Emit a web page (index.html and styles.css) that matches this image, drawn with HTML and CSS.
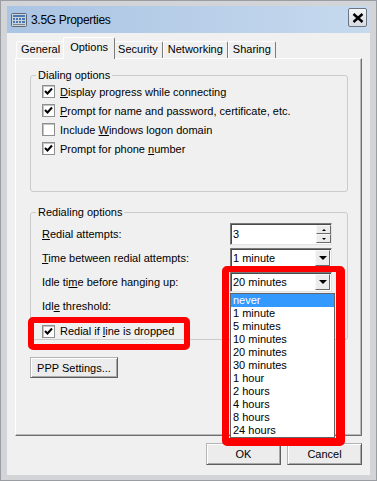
FILE: index.html
```html
<!DOCTYPE html>
<html lang="en">
<head>
    <meta charset="UTF-8">
    <meta name="viewport" content="width=device-width, initial-scale=1.0">
    <title>3.5G Properties</title>
    <link rel="stylesheet" href="styles.css">
</head>
<body>
    <div class="window">
        <div class="titlebar">
            <svg class="app-icon" width="16" height="16" viewBox="0 0 16 16">
                <rect x="0.5" y="1.5" width="15" height="13" rx="1" fill="#cdd3da" stroke="#5f6873"/>
                <rect x="2" y="3" width="12" height="2" fill="#4a78b5"/>
                <rect x="2" y="6" width="2" height="2" fill="#4a78b5"/>
                <rect x="5" y="6" width="2" height="2" fill="#4a78b5"/>
                <rect x="8" y="6" width="2" height="2" fill="#4a78b5"/>
                <rect x="11" y="6" width="3" height="2" fill="#4a78b5"/>
                <rect x="2" y="9" width="2" height="2" fill="#4a78b5"/>
                <rect x="5" y="9" width="2" height="2" fill="#4a78b5"/>
                <rect x="8" y="9" width="2" height="2" fill="#4a78b5"/>
                <rect x="11" y="9" width="3" height="2" fill="#4a78b5"/>
                <rect x="2" y="12" width="12" height="1" fill="#7d8793"/>
            </svg>
            <span class="title">3.5G Properties</span>
            <div class="close-btn">
                <svg width="12" height="10" viewBox="0 0 12 10">
                    <path d="M1.5 1 L10.5 9 M10.5 1 L1.5 9" stroke="#000" stroke-width="2.4"/>
                </svg>
            </div>
        </div>

        <div class="client">
            <div class="tabs">
                <div class="tab">General</div>
                <div class="tab active">Options</div>
                <div class="tab">Security</div>
                <div class="tab">Networking</div>
                <div class="tab">Sharing</div>
            </div>

            <div class="panel">
                <fieldset class="group dialing">
                    <legend>Dialing options</legend>
                    <label class="check"><span class="box checked"></span><span><u>D</u>isplay progress while connecting</span></label>
                    <label class="check"><span class="box checked"></span><span><u>P</u>rompt for name and password, certificate, etc.</span></label>
                    <label class="check"><span class="box"></span><span>Include <u>W</u>indows logon domain</span></label>
                    <label class="check"><span class="box checked"></span><span>Prompt for phone <u>n</u>umber</span></label>
                </fieldset>

                <fieldset class="group redial">
                    <legend>Redialing options</legend>
                    <div class="row">
                        <span><u>R</u>edial attempts:</span>
                        <div class="field spin">
                            <span class="value">3</span>
                            <div class="spin-btns">
                                <span class="spin-btn"><i class="arrow-up"></i></span>
                                <span class="spin-btn"><i class="arrow-small-down"></i></span>
                            </div>
                        </div>
                    </div>
                    <div class="row">
                        <span><u>T</u>ime between redial attempts:</span>
                        <div class="field combo">
                            <span class="value">1 minute</span>
                            <span class="combo-btn"><i class="arrow-down"></i></span>
                        </div>
                    </div>
                    <div class="row">
                        <span>Idle ti<u>m</u>e before hanging up:</span>
                        <div class="field combo">
                            <span class="value">20 minutes</span>
                            <span class="combo-btn"><i class="arrow-down"></i></span>
                        </div>
                    </div>
                    <div class="row">
                        <span>Idl<u>e</u> threshold:</span>
                    </div>
                    <label class="check"><span class="box checked"></span><span>Redial if <u>l</u>ine is dropped</span></label>
                </fieldset>

                <button class="btn ppp">PPP Settings...</button>
            </div>

            <div class="actions">
                <button class="btn">OK</button>
                <button class="btn">Cancel</button>
            </div>

            <!-- open list of the "Idle time" combo -->
            <ul class="dropdown">
                <li class="selected">never</li>
                <li>1 minute</li>
                <li>5 minutes</li>
                <li>10 minutes</li>
                <li>20 minutes</li>
                <li>30 minutes</li>
                <li>1 hour</li>
                <li>2 hours</li>
                <li>4 hours</li>
                <li>8 hours</li>
                <li>24 hours</li>
            </ul>

            <!-- red highlight marks -->
            <div class="mark mark-combo"></div>
            <div class="mark mark-check"></div>
        </div>
    </div>
</body>
</html>
```

FILE: styles.css
```css
body {
    margin: 0;
    font-family: "Liberation Sans", Arial, sans-serif;
    font-size: 11px;
    color: #000;
    background: #d2d4d7;
}

.window {
    width: 377px;
    height: 481px;
    box-sizing: border-box;
    padding: 6px 7px;
    background: #d2d4d7;
    box-shadow: inset 0 0 0 1px #9a9da1;
    display: flex;
    flex-direction: column;
}

/* title bar */
.titlebar {
    height: 27px;
    flex: none;
    display: flex;
    align-items: center;
    padding: 0 3px 0 4px;
    background: linear-gradient(to right, #aac4e3, #c6d9ee);
}

.app-icon {
    flex: none;
}

.title {
    flex: 1;
    margin-left: 4px;
    font-size: 12px;
    letter-spacing: -0.3px;
}

.close-btn {
    width: 19px;
    height: 19px;
    box-sizing: border-box;
    align-self: flex-start;
    margin-top: 2px;
    border: 1px solid #6d7480;
    border-radius: 2px;
    background: linear-gradient(#f4f6f8, #d6dbe2);
    display: flex;
    align-items: center;
    justify-content: center;
}

/* dialog body */
.client {
    position: relative;
    flex: 1;
    background: #f0f0f0;
    padding: 4px 8px 0 8px;
}

.tabs {
    display: flex;
    align-items: flex-end;
    height: 21px;
    padding-left: 1px;
}

.tab {
    height: 17px;
    line-height: 15px;
    box-sizing: border-box;
    padding: 0 4px;
    border-top: 1px solid #fff;
    border-left: 1px solid #fff;
    border-right: 1px solid #7c7c7c;
    border-radius: 2px 2px 0 0;
}

.tab.active {
    position: relative;
    z-index: 1;
    height: 22px;
    line-height: 18px;
    margin: 0 -2px -1px;
    padding: 0 6px;
    background: #f0f0f0;
}

.panel {
    height: 378px;
    box-sizing: border-box;
    border: 1px solid;
    border-color: #fff #6f6f6f #6f6f6f #fff;
    box-shadow: inset -1px -1px 0 #b9b9b9;
    padding: 10px 13px 0 14px;
}

/* group boxes */
.group {
    margin: 0;
    min-width: 0;
    border: 1px solid #cbcbcb;
    border-radius: 3px;
}

.group legend {
    padding: 0 2px;
    margin-left: -6px;
    line-height: 13px;
}

.dialing {
    padding: 0 15px 33px 11px;
}

.redial {
    margin-top: 14px;
    padding: 3px 15px 0 11px;
}

.check {
    display: flex;
    align-items: center;
    height: 19px;
}

.redial .check {
    height: 16px;
    margin-top: 5px;
}

.box {
    width: 13px;
    height: 13px;
    flex: none;
    box-sizing: border-box;
    margin-right: 5px;
    border: 1px solid #8e8f8f;
    background: #fff;
    box-shadow: inset 1px 1px 0 #c4c4c4;
}

.box.checked {
    background: #fff url("data:image/svg+xml;utf8,<svg xmlns='http://www.w3.org/2000/svg' width='11' height='11'><path d='M2 5 L4.5 7.5 L9 2.5' fill='none' stroke='black' stroke-width='2'/></svg>") no-repeat center;
}

.row {
    display: flex;
    align-items: center;
    justify-content: space-between;
    height: 24px;
}

/* edit fields */
.field {
    width: 102px;
    height: 20px;
    box-sizing: border-box;
    display: flex;
    align-items: center;
    background: #fff;
    border: 1px solid;
    border-color: #7a7a7a #e3e3e3 #e3e3e3 #7a7a7a;
    box-shadow: inset 1px 1px 0 #4a4a4a;
}

.spin {
    height: 22px;
}

.value {
    flex: 1;
    padding-left: 2px;
}

.spin-btns {
    align-self: stretch;
    width: 15px;
    display: flex;
    flex-direction: column;
    padding: 1px 0;
}

.spin-btn,
.combo-btn {
    box-sizing: border-box;
    display: flex;
    align-items: center;
    justify-content: center;
    background: #ececec;
    border: 1px solid;
    border-color: #f8f8f8 #6a6a6a #6a6a6a #f8f8f8;
}

.spin-btn {
    flex: 1;
}

.combo-btn {
    width: 15px;
    height: 16px;
    margin-right: 1px;
}

.arrow-down {
    width: 0;
    height: 0;
    border-left: 4px solid transparent;
    border-right: 4px solid transparent;
    border-top: 4px solid #000;
}

.arrow-up {
    width: 0;
    height: 0;
    border-left: 2px solid transparent;
    border-right: 2px solid transparent;
    border-bottom: 2px solid #000;
}

.arrow-small-down {
    width: 0;
    height: 0;
    border-left: 2px solid transparent;
    border-right: 2px solid transparent;
    border-top: 2px solid #000;
}

/* buttons */
.btn {
    font: inherit;
    color: #000;
    padding: 0;
    background: #ececec;
    border: 1px solid;
    border-color: #b4b4b4 #5e5e5e #5e5e5e #b4b4b4;
    box-shadow: inset 1px 1px 0 #fff, inset -1px -1px 0 #a8a8a8;
}

.ppp {
    display: block;
    width: 88px;
    height: 21px;
    margin-top: 17px;
}

.actions {
    display: flex;
    justify-content: flex-end;
    gap: 6px;
    margin-top: 7px;
}

.actions .btn {
    width: 75px;
    height: 22px;
}

/* open combo list */
.dropdown {
    position: absolute;
    left: 223px;
    top: 260px;
    width: 105px;
    box-sizing: border-box;
    margin: 0;
    padding: 0;
    list-style: none;
    background: #fff;
    border: 1px solid #646464;
}

.dropdown li {
    height: 13px;
    line-height: 13px;
    padding-left: 2px;
}

.dropdown li.selected {
    background: #3399ff;
    color: #fff;
}

/* annotation marks */
.mark {
    position: absolute;
    box-sizing: border-box;
    border: 6px solid #ff0000;
    border-radius: 5px;
}

.mark-combo {
    left: 215px;
    top: 233px;
    width: 123px;
    height: 180px;
    border-width: 6px 9px 8px 7px;
}

.mark-check {
    left: 21px;
    top: 284px;
    width: 162px;
    height: 33px;
}
```
